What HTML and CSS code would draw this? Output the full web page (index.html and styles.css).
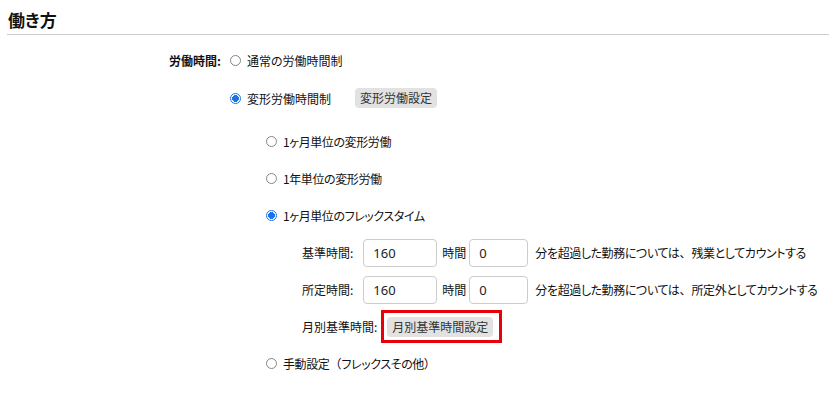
FILE: index.html
```html
<!DOCTYPE html>
<html lang="ja">
<head>
<meta charset="utf-8">
<title>働き方</title>
<link rel="stylesheet" href="styles.css">
</head>
<body>
<h2 class="section-title">働き方</h2>
<div class="form">
  <div class="form-row">
    <div class="form-label">労働時間:</div>
    <div class="form-field">
      <div class="line">
        <label class="radio-label"><input type="radio" name="work" class="radio"><span>通常の労働時間制</span></label>
      </div>
      <div class="line">
        <label class="radio-label"><input type="radio" name="work" class="radio" checked><span>変形労働時間制</span></label>
        <button class="btn btn-after">変形労働設定</button>
      </div>
      <div class="sub-options">
        <div class="line">
          <label class="radio-label"><input type="radio" name="type" class="radio"><span class="kana">1ヶ月単位の変形労働</span></label>
        </div>
        <div class="line">
          <label class="radio-label"><input type="radio" name="type" class="radio"><span class="kana">1年単位の変形労働</span></label>
        </div>
        <div class="line">
          <label class="radio-label"><input type="radio" name="type" class="radio" checked><span class="kana">1ヶ月単位のフレックスタイム</span></label>
        </div>
        <div class="flex-settings">
          <div class="line">
            <span class="field-label">基準時間:</span>
            <input type="text" class="input input-hours" value="160">
            <span class="unit">時間</span>
            <input type="text" class="input input-minutes" value="0">
            <span class="note kana">分を超過した勤務については<span class="punct">、</span>残業としてカウントする</span>
          </div>
          <div class="line">
            <span class="field-label">所定時間:</span>
            <input type="text" class="input input-hours" value="160">
            <span class="unit">時間</span>
            <input type="text" class="input input-minutes" value="0">
            <span class="note kana">分を超過した勤務については<span class="punct">、</span>所定外としてカウントする</span>
          </div>
          <div class="line">
            <span class="field-label field-label-tight">月別基準時間:</span>
            <span class="highlight"><button class="btn">月別基準時間設定</button></span>
          </div>
        </div>
        <div class="line">
          <label class="radio-label"><input type="radio" name="type" class="radio"><span class="kana">手動設定<span class="punct">（</span>フレックスその他<span class="punct">）</span></span></label>
        </div>
      </div>
    </div>
  </div>
</div>
</body>
</html>
```

FILE: styles.css
```css
* { box-sizing: border-box; }

body {
  margin: 0;
  background: #ffffff;
  color: #111111;
  font-family: "Noto Sans CJK JP", "Noto Sans", sans-serif;
  font-size: 12px;
  font-feature-settings: "palt";
}

.section-title {
  margin: 0 0 0 7px;
  padding: 10px 0 4px 1px;
  font-size: 17px;
  line-height: 20px;
  font-weight: bold;
  color: #111111;
  border-bottom: 1px solid #cccccc;
}

.form {
  padding-top: 6px;
}

.form-row {
  display: flex;
  align-items: flex-start;
}

.form-label {
  width: 222px;
  height: 38px;
  display: flex;
  align-items: center;
  justify-content: flex-end;
  font-weight: bold;
  padding-right: 1px;
}

.form-field {
  padding-left: 8px;
}

.line {
  display: flex;
  align-items: center;
  height: 38px;
  white-space: nowrap;
}

.radio-label {
  display: flex;
  align-items: center;
}

.kana {
  letter-spacing: -0.4px;
}

.punct {
  font-feature-settings: normal;
  letter-spacing: 0;
}

.radio {
  appearance: none;
  -webkit-appearance: none;
  width: 11px;
  height: 11px;
  margin: 0 6px 0 0;
  border: 1px solid #858585;
  border-radius: 50%;
  background: #ffffff;
}

.radio:checked {
  border-color: #1a73e8;
  background: radial-gradient(circle, #1a73e8 0 3.2px, #ffffff 3.6px);
}

.btn {
  font-family: inherit;
  font-size: 12px;
  font-feature-settings: "palt";
  color: #333333;
  background: #e2e2e2;
  border: none;
  border-radius: 4px;
  height: 20px;
  padding: 0 5px;
  line-height: 20px;
}

.btn-after {
  margin-left: 24px;
}

.sub-options {
  margin-top: 6px;
  padding-left: 36px;
}

.sub-options .line {
  height: 37px;
}

.flex-settings {
  padding-left: 36px;
}

.field-label {
  margin-right: 10px;
}

.field-label-tight {
  margin-right: 5px;
}

.input {
  height: 28px;
  border: 1px solid #cccccc;
  border-radius: 4px;
  padding: 0 9px;
  font-family: "Noto Sans", sans-serif;
  font-size: 13px;
  color: #222222;
  background: #ffffff;
}

.input-hours {
  width: 74px;
}

.input-minutes {
  width: 59px;
}

.unit {
  margin: 0 3px 0 5px;
}

.note {
  margin-left: 7px;
}

.highlight {
  display: inline-flex;
  border: 3px solid #e8000b;
  padding: 4px 6px 3px 3px;
  margin-left: -1px;
}
```
